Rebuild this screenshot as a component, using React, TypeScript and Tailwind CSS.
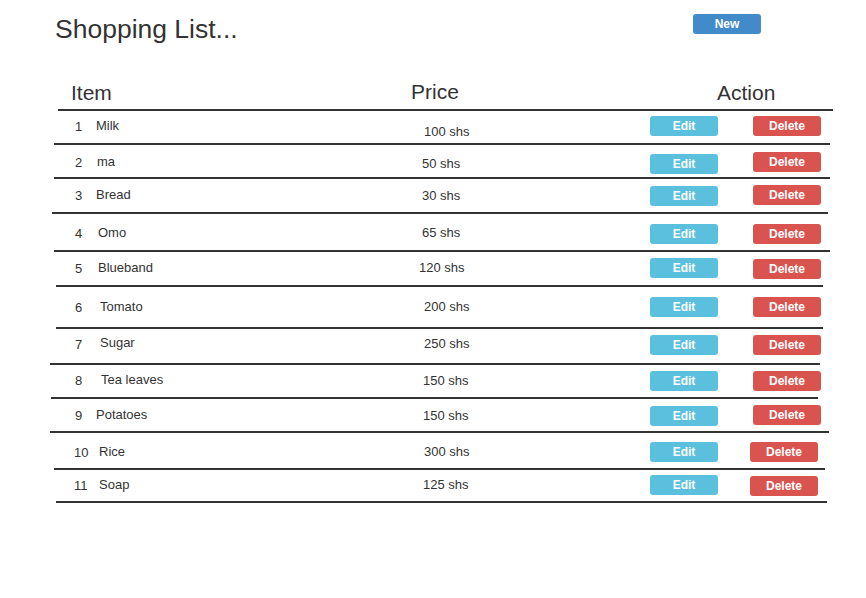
import React from "react";

type Row = {
  n: number;
  name: string;
  price: string;
  h: string;
  numPl: string;
  numPt: string;
  namePl: string;
  namePt: string;
  pricePl: string;
  pricePt: string;
  editPt: string;
  delPl: string;
  delPt: string;
  line: string;
};

const rows: Row[] = [
  { n: 1, name: "Milk", price: "100 shs", h: "h-[32px]", numPl: "pl-[75px]", numPt: "pt-[9px]", namePl: "pl-[6px]", namePt: "pt-[8px]", pricePl: "pl-[24px]", pricePt: "pt-[14px]", editPt: "pt-[5px]", delPl: "pl-[13px]", delPt: "pt-[5px]", line: "ml-[54px] w-[776px]" },
  { n: 2, name: "ma", price: "50 shs", h: "h-[32px]", numPl: "pl-[75px]", numPt: "pt-[11px]", namePl: "pl-[7px]", namePt: "pt-[10px]", pricePl: "pl-[22px]", pricePt: "pt-[12px]", editPt: "pt-[9px]", delPl: "pl-[13px]", delPt: "pt-[7px]", line: "ml-[54px] w-[776px]" },
  { n: 3, name: "Bread", price: "30 shs", h: "h-[33px]", numPl: "pl-[75px]", numPt: "pt-[10px]", namePl: "pl-[6px]", namePt: "pt-[9px]", pricePl: "pl-[22px]", pricePt: "pt-[10px]", editPt: "pt-[7px]", delPl: "pl-[13px]", delPt: "pt-[6px]", line: "ml-[52px] w-[776px]" },
  { n: 4, name: "Omo", price: "65 shs", h: "h-[36px]", numPl: "pl-[75px]", numPt: "pt-[13px]", namePl: "pl-[8px]", namePt: "pt-[12px]", pricePl: "pl-[22px]", pricePt: "pt-[12px]", editPt: "pt-[10px]", delPl: "pl-[13px]", delPt: "pt-[10px]", line: "ml-[54px] w-[776px]" },
  { n: 5, name: "Blueband", price: "120 shs", h: "h-[33px]", numPl: "pl-[75px]", numPt: "pt-[10px]", namePl: "pl-[8px]", namePt: "pt-[9px]", pricePl: "pl-[19px]", pricePt: "pt-[9px]", editPt: "pt-[6px]", delPl: "pl-[13px]", delPt: "pt-[7px]", line: "ml-[56px] w-[767px]" },
  { n: 6, name: "Tomato", price: "200 shs", h: "h-[40px]", numPl: "pl-[75px]", numPt: "pt-[14px]", namePl: "pl-[10px]", namePt: "pt-[13px]", pricePl: "pl-[24px]", pricePt: "pt-[13px]", editPt: "pt-[10px]", delPl: "pl-[13px]", delPt: "pt-[10px]", line: "ml-[56px] w-[767px]" },
  { n: 7, name: "Sugar", price: "250 shs", h: "h-[34px]", numPl: "pl-[75px]", numPt: "pt-[9px]", namePl: "pl-[10px]", namePt: "pt-[7px]", pricePl: "pl-[24px]", pricePt: "pt-[8px]", editPt: "pt-[6px]", delPl: "pl-[13px]", delPt: "pt-[6px]", line: "ml-[50px] w-[770px]" },
  { n: 8, name: "Tea leaves", price: "150 shs", h: "h-[32px]", numPl: "pl-[75px]", numPt: "pt-[9px]", namePl: "pl-[11px]", namePt: "pt-[8px]", pricePl: "pl-[23px]", pricePt: "pt-[9px]", editPt: "pt-[6px]", delPl: "pl-[13px]", delPt: "pt-[6px]", line: "ml-[51px] w-[767px]" },
  { n: 9, name: "Potatoes", price: "150 shs", h: "h-[32px]", numPl: "pl-[75px]", numPt: "pt-[10px]", namePl: "pl-[6px]", namePt: "pt-[9px]", pricePl: "pl-[23px]", pricePt: "pt-[10px]", editPt: "pt-[7px]", delPl: "pl-[13px]", delPt: "pt-[6px]", line: "ml-[50px] w-[779px]" },
  { n: 10, name: "Rice", price: "300 shs", h: "h-[35px]", numPl: "pl-[74px]", numPt: "pt-[13px]", namePl: "pl-[9px]", namePt: "pt-[12px]", pricePl: "pl-[24px]", pricePt: "pt-[12px]", editPt: "pt-[9px]", delPl: "pl-[10px]", delPt: "pt-[9px]", line: "ml-[54px] w-[771px]" },
  { n: 11, name: "Soap", price: "125 shs", h: "h-[31px]", numPl: "pl-[74px]", numPt: "pt-[9px]", namePl: "pl-[9px]", namePt: "pt-[8px]", pricePl: "pl-[23px]", pricePt: "pt-[8px]", editPt: "pt-[5px]", delPl: "pl-[10px]", delPt: "pt-[6px]", line: "ml-[56px] w-[771px]" },
];

function Btn({ label, color }: { label: string; color: string }) {
  return (
    <div
      className={`w-[68px] h-[20px] rounded-[3px] text-white font-bold text-[12px] leading-none flex items-center justify-center ${color}`}
    >
      {label}
    </div>
  );
}

export default function App() {
  return (
    <div className="w-[866px] h-[598px] bg-white text-[#333] font-['Liberation_Sans',Arial,sans-serif] overflow-hidden">
      {/* Title bar */}
      <div className="flex items-start h-[81px]">
        <div className="w-[693px] pl-[55px] pt-[16px] text-[26.5px] leading-none">
          Shopping List...
        </div>
        <div className="pt-[14px]">
          <Btn label="New" color="bg-[#428bca]" />
        </div>
      </div>

      {/* Header */}
      <div className="flex items-start h-[28px] text-[21px] leading-none">
        <div className="w-[400px] pl-[71px] pt-[1px]">Item</div>
        <div className="w-[240px] pl-[11px]">Price</div>
        <div className="flex-1 pl-[77px] pt-[1px]">Action</div>
      </div>
      <div className="h-[2px] ml-[58px] w-[775px] bg-[#333]" />

      {/* Rows */}
      {rows.map((r) => (
        <div key={r.n}>
          <div className={`flex items-start text-[13px] leading-none ${r.h}`}>
            <div className={`w-[90px] ${r.numPl} ${r.numPt}`}>{r.n}</div>
            <div className={`w-[310px] ${r.namePl} ${r.namePt}`}>{r.name}</div>
            <div className={`w-[240px] ${r.pricePl} ${r.pricePt}`}>{r.price}</div>
            <div className={`w-[100px] pl-[10px] ${r.editPt}`}>
              <Btn label="Edit" color="bg-[#5bc0de]" />
            </div>
            <div className={`flex-1 ${r.delPl} ${r.delPt}`}>
              <Btn label="Delete" color="bg-[#d9534f]" />
            </div>
          </div>
          <div className={`h-[2px] bg-[#333] ${r.line}`} />
        </div>
      ))}
    </div>
  );
}
